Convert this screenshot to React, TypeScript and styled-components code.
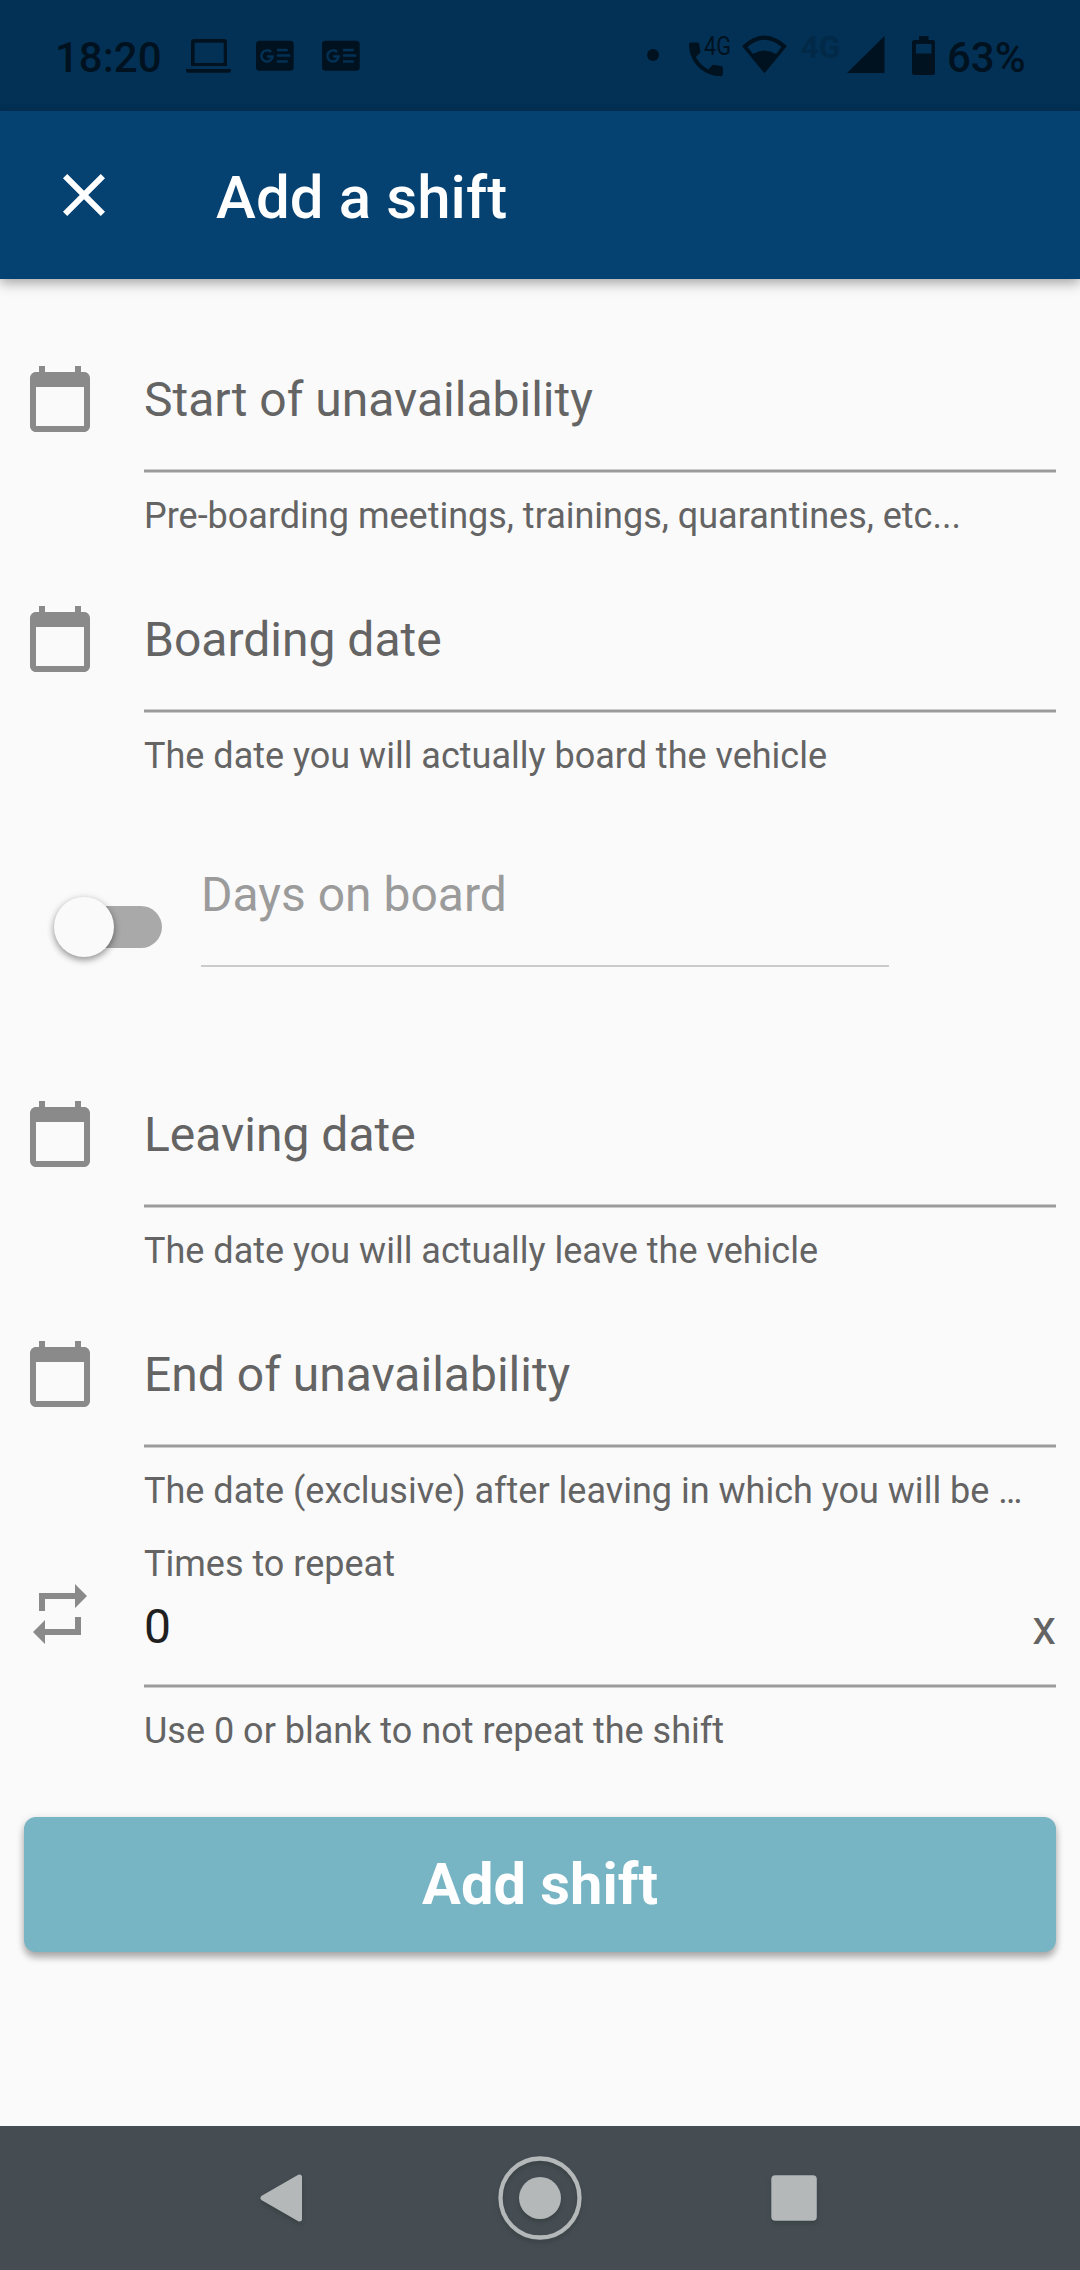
import React from "react";
import styled, { createGlobalStyle } from "styled-components";

const INK = "#00121f";
const STATUS_BG = "#033155";

const GlobalStyle = createGlobalStyle`
  *, *::before, *::after { box-sizing: border-box; }
  html, body { margin: 0; padding: 0; }
  body { background: #fafafa; font-family: Roboto, sans-serif; }
  svg { display: block; flex: none; }
`;

const Screen = styled.div`
  width: 1080px;
  height: 2270px;
  display: flex;
  flex-direction: column;
  background: #fafafa;
  overflow: hidden;
`;

const StatusBar = styled.div`
  height: 111px;
  flex: none;
  display: flex;
  align-items: flex-start;
  justify-content: space-between;
  padding: 22px 56px 0 55px;
  background: ${STATUS_BG};
`;

const StatusGroup = styled.div`
  display: flex;
  align-items: flex-start;
`;

const StatusText = styled.span<{ $width: number }>`
  width: ${(p) => p.$width}px;
  padding-top: 11px;
  font-size: 42px;
  line-height: 50px;
  font-weight: 500;
  color: ${INK};
  white-space: nowrap;
`;

const AppBar = styled.header`
  height: 168px;
  flex: none;
  display: flex;
  align-items: center;
  padding: 0 48px;
  gap: 96px;
  background: #054272;
  box-shadow: 0 6px 12px rgba(0, 0, 0, 0.2), 0 2px 10px rgba(0, 0, 0, 0.16);
  z-index: 1;
`;

const Title = styled.h1`
  margin: 5px 0 0;
  font-size: 60px;
  line-height: 70px;
  font-weight: 500;
  letter-spacing: 0.1px;
  color: #fff;
`;

const IconButton = styled.button`
  padding: 0;
  border: 0;
  background: none;
`;

const Form = styled.main`
  flex: 1;
  padding: 60px 24px 0;
`;

const Row = styled.div<{ $pad: number; $height?: number }>`
  display: flex;
  height: ${(p) => p.$height ?? 240}px;
  padding-top: ${(p) => p.$pad}px;
  gap: 48px;
`;

const RowIcon = styled.div<{ $top: number }>`
  width: 72px;
  padding-top: ${(p) => p.$top}px;
`;

const Field = styled.div`
  flex: 1;
  min-width: 0;
`;

const Label = styled.div<{ $top?: number; $disabled?: boolean }>`
  height: 56px;
  padding-top: ${(p) => p.$top ?? 0}px;
  font-size: 48px;
  line-height: 56px;
  color: ${(p) => (p.$disabled ? "#9b9b9b" : "#646464")};
`;

const Underline = styled.div<{ $gap: number }>`
  height: 4px;
  margin-top: ${(p) => p.$gap}px;
  background: #9b9b9b;
  border: solid #cbcbcb;
  border-width: 1px 0;
`;

const ThinLine = styled.div`
  height: 2px;
  margin-top: 42px;
  background: #cbcbcb;
`;

const Small = styled.div<{ $top: number }>`
  margin-top: ${(p) => p.$top}px;
  height: 42px;
  font-size: 36px;
  line-height: 42px;
  color: #646464;
  white-space: nowrap;
  overflow: hidden;
  text-overflow: ellipsis;
`;

const ValueLine = styled.div`
  display: flex;
  justify-content: space-between;
  height: 56px;
  margin-top: 14px;
  font-size: 48px;
  line-height: 56px;
  color: #202020;
`;

const Suffix = styled.span`
  padding-top: 1px;
  color: #646464;
`;

const SwitchRow = styled.div`
  display: flex;
  height: 255px;
  padding: 48px 0 0 30px;
`;

const Track = styled.div`
  width: 108px;
  height: 42px;
  margin-top: 39px;
  display: flex;
  align-items: center;
  border-radius: 21px;
  background: linear-gradient(to right, transparent 30px, #a9a9a9 30px);
`;

const Thumb = styled.div`
  width: 60px;
  height: 60px;
  border-radius: 50%;
  background: #fafafa;
  box-shadow: 0 3px 6px rgba(0, 0, 0, 0.3), 0 2px 10px rgba(0, 0, 0, 0.16);
`;

const SwitchField = styled.div`
  width: 688px;
  margin-left: 39px;
`;

const Submit = styled.button`
  display: block;
  width: 1032px;
  height: 135px;
  margin-top: 33.5px;
  padding: 0;
  border: 0;
  border-radius: 12px;
  background: #77b4c4;
  box-shadow: 0 6px 7px rgba(0, 0, 0, 0.24), 0 2px 8px rgba(0, 0, 0, 0.16);
  font-family: inherit;
  font-size: 57.8px;
  font-weight: 700;
  line-height: 70px;
  color: #fff;
`;

const NavBar = styled.nav`
  height: 144px;
  flex: none;
  display: flex;
  align-items: center;
  justify-content: center;
  gap: 150px;
  background: #454d53;
`;

const NavGlyph = styled.svg`
  filter: drop-shadow(0 3px 2px rgba(50, 58, 58, 0.6));
  overflow: visible;
`;

const CalendarIcon = () => (
  <svg width="72" height="72" viewBox="0 0 24 24" fill="#8a8a8a">
    <path d="M20 3h-1V1h-2v2H7V1H5v2H4c-1.1 0-2 .9-2 2v16c0 1.1.9 2 2 2h16c1.1 0 2-.9 2-2V5c0-1.1-.9-2-2-2zm0 18H4V8h16v13z" />
  </svg>
);

const RepeatIcon = () => (
  <svg width="72" height="72" viewBox="0 0 24 24" fill="#8a8a8a">
    <path d="M7 7h10v3l4-4-4-4v3H5v6h2V7zm10 10H7v-3l-4 4 4 4v-3h12v-6h-2v4z" />
  </svg>
);

const CloseIcon = () => (
  <svg width="72" height="72" viewBox="0 0 24 24" fill="#fff">
    <path d="M19 6.41L17.59 5 12 10.59 6.41 5 5 6.41 10.59 12 5 17.59 6.41 19 12 13.41 17.59 19 19 17.59 13.41 12z" />
  </svg>
);

const NewsGlyph = ({ x }: { x: number }) => (
  <g transform={`translate(${x} 8.7)`}>
    <rect width="37.700" height="30" rx="3.500" fill={INK} />
    <path d="M15 11.300A5.600 5.600 0 1 0 16.600 15.800H11.200" fill="none" stroke={STATUS_BG} strokeWidth="2.500" />
    <path d="M21 9.300h10.700M21 14.700h13.300M21 20.700h10.700" stroke={STATUS_BG} strokeWidth="2.500" />
  </g>
);

/* Notification icons that follow the clock. */
const Notifications = () => (
  <svg width="180" height="60" viewBox="0 -10 180 60">
    <path fill={INK} fillRule="evenodd" d="M8 7h30a3 3 0 0 1 3 3v24H5V10a3 3 0 0 1 3-3zM8.700 10.700v20.300h29V10.700z" />
    <path fill={INK} d="M0 37h45v1.700a2 2 0 0 1-2 2H2a2 2 0 0 1-2-2z" />
    <NewsGlyph x={70} />
    <NewsGlyph x={136} />
  </svg>
);

/* Call, wifi, mobile signal and battery. */
const SystemIcons = () => (
  <svg width="307" height="60" viewBox="640 22 307 60" fill={INK}>
    <circle cx="653" cy="55" r="6" />
    <path transform="translate(683.4 36.900) scale(1.880 1.870)" d="M20 15.500c-1.200 0-2.450-.2-3.570-.57-.35-.11-.74-.03-1.020.24l-2.200 2.200c-2.830-1.440-5.150-3.750-6.590-6.590l2.200-2.210c.28-.26.36-.65.25-1C8.700 6.450 8.500 5.200 8.500 4c0-.55-.45-1-1-1H4c-.55 0-1 .45-1 1 0 9.390 7.610 17 17 17 .55 0 1-.45 1-1v-3.500c0-.55-.45-1-1-1z" />
    <text x="704" y="55" fontSize="26" textLength="27" lengthAdjust="spacingAndGlyphs">4G</text>
    <path fillRule="evenodd" d="M742 46Q764.500 25 787 46L764.500 73.300zM747.500 47L753 54Q764.500 47 776 54L781.500 47Q764.500 32.500 747.500 47z" />
    <text x="800.500" y="58" fontSize="31" fontWeight="700" fill="#022947" textLength="40" lengthAdjust="spacingAndGlyphs">4G</text>
    <path d="M884.500 36V73H847z" />
    <path fillRule="evenodd" d="M919 36h9.500v4h4a2.500 2.500 0 0 1 2.500 2.500V72.500a2.500 2.500 0 0 1-2.500 2.500h-18a2.500 2.500 0 0 1-2.500-2.500V42.500a2.500 2.500 0 0 1 2.500-2.500h4.500zM916 44v9.500h15.500V44z" />
  </svg>
);

const DateField = ({ label, hint, height }: { label: string; hint: string; height?: number }) => (
  <Row $pad={24} $height={height}>
    <RowIcon $top={0}>
      <CalendarIcon />
    </RowIcon>
    <Field>
      <Label $top={9}>{label}</Label>
      <Underline $gap={50} />
      <Small $top={22}>{hint}</Small>
    </Field>
  </Row>
);

export default function App() {
  return (
    <>
      <GlobalStyle />
      <Screen>
        <StatusBar>
          <StatusGroup>
            <StatusText $width={131}>18:20</StatusText>
            <Notifications />
          </StatusGroup>
          <StatusGroup>
            <SystemIcons />
            <StatusText $width={77}>63%</StatusText>
          </StatusGroup>
        </StatusBar>
        <AppBar>
          <IconButton aria-label="Close">
            <CloseIcon />
          </IconButton>
          <Title>Add a shift</Title>
        </AppBar>
        <Form>
          <DateField label="Start of unavailability" hint="Pre-boarding meetings, trainings, quarantines, etc..." />
          <DateField label="Boarding date" hint="The date you will actually board the vehicle" />
          <SwitchRow>
            <Track>
              <Thumb />
            </Track>
            <SwitchField>
              <Label $disabled>Days on board</Label>
              <ThinLine />
            </SwitchField>
          </SwitchRow>
          <DateField label="Leaving date" hint="The date you will actually leave the vehicle" />
          <DateField
            label="End of unavailability"
            hint="The date (exclusive) after leaving in which you will be …"
            height={229}
          />
          <Row $pad={0}>
            <RowIcon $top={35}>
              <RepeatIcon />
            </RowIcon>
            <Field>
              <Small $top={0}>Times to repeat</Small>
              <ValueLine>
                <span>0</span>
                <Suffix>x</Suffix>
              </ValueLine>
              <Underline $gap={29} />
              <Small $top={22}>Use 0 or blank to not repeat the shift</Small>
            </Field>
          </Row>
          <Submit>Add shift</Submit>
        </Form>
        <NavBar>
          <NavGlyph width="120" height="96" viewBox="222 2150 120 96">
            <path d="M263 2198L299.500 2177V2219z" fill="#b4b8b9" stroke="#b4b8b9" strokeWidth="5" strokeLinejoin="round" />
          </NavGlyph>
          <NavGlyph width="96" height="96" viewBox="492 2150 96 96">
            <circle cx="540" cy="2198" r="39.500" fill="none" stroke="#b4b8b9" strokeWidth="4.300" />
            <circle cx="540" cy="2198" r="21" fill="#b4b8b9" />
          </NavGlyph>
          <NavGlyph width="120" height="96" viewBox="738 2150 120 96">
            <rect x="771.300" y="2175.300" width="45.500" height="45.500" rx="4" fill="#b4b8b9" />
          </NavGlyph>
        </NavBar>
      </Screen>
    </>
  );
}
